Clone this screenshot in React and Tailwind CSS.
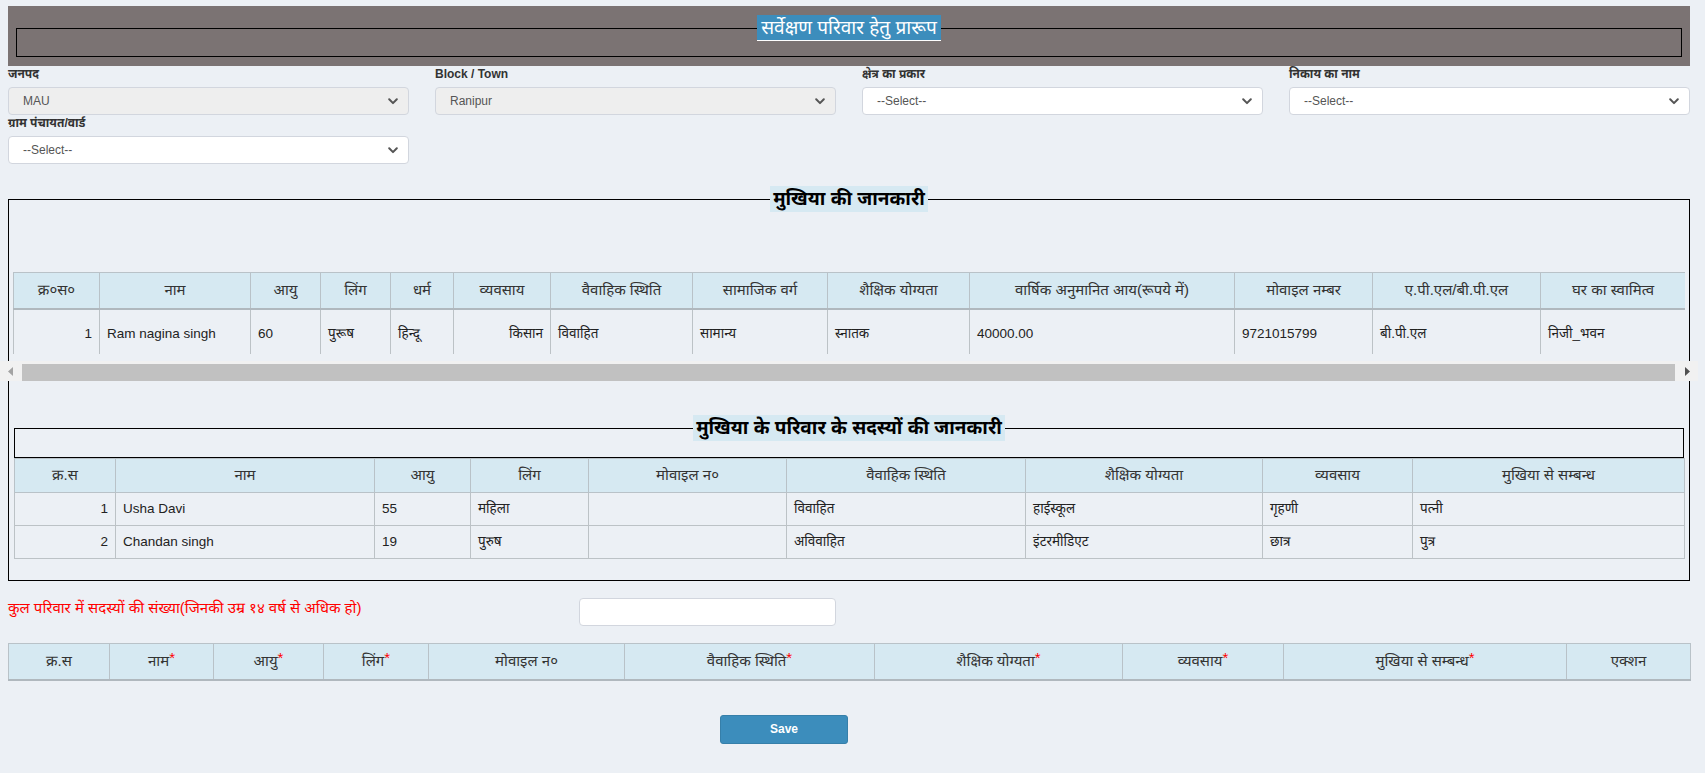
import React from 'react';

const FONT = { fontFamily: '"Liberation Sans", "Noto Sans Devanagari", "Lohit Devanagari", "Noto Sans", Arial, sans-serif' };

const Chevron = () => (
  <svg width="10" height="7" viewBox="0 0 10 7" fill="none">
    <path d="M1.2 1.3 L5 5.1 L8.8 1.3" stroke="#555" strokeWidth="2" strokeLinecap="round" strokeLinejoin="round" />
  </svg>
);

const SelectBox = ({ label, value, disabled }) => (
  <div>
    <div className="h-[21px] text-[12px] leading-[16px] font-bold text-[#333]">{label}</div>
    <div
      className={`h-[28px] flex items-center justify-between pl-[14px] pr-[10px] border border-[#d2d6de] rounded-[4px] text-[12px] text-[#555] ${
        disabled ? 'bg-[#eeeeee]' : 'bg-white'
      }`}
    >
      <span>{value}</span>
      <Chevron />
    </div>
  </div>
);

const Star = () => <span className="text-[#ff0000] align-top text-[15px] leading-[16px]">*</span>;

const headCell = 'border border-[#b9c2c8] bg-[#d6e9f2] text-center font-normal text-[#333] px-[6px] text-[15px]';
const bodyCell = 'border border-[#bcc2c6] text-[#222] px-[7px] whitespace-nowrap';

const mukhiyaCols = [86, 151, 70, 70, 63, 97, 142, 135, 142, 265, 138, 168, 145];
const mukhiyaHead = [
  'क्र०स०', 'नाम', 'आयु', 'लिंग', 'धर्म', 'व्यवसाय', 'वैवाहिक स्थिति', 'सामाजिक वर्ग',
  'शैक्षिक योग्यता', 'वार्षिक अनुमानित आय(रूपये में)', 'मोवाइल नम्बर', 'ए.पी.एल/बी.पी.एल', 'घर का स्वामित्व',
];
const mukhiyaRow = [
  '1', 'Ram nagina singh', '60', 'पुरूष', 'हिन्दू', 'किसान', 'विवाहित', 'सामान्य',
  'स्नातक', '40000.00', '9721015799', 'बी.पी.एल', 'निजी_भवन',
];

const memberCols = [101, 259, 96, 118, 198, 239, 237, 150, 272];
const memberHead = ['क्र.स', 'नाम', 'आयु', 'लिंग', 'मोवाइल न०', 'वैवाहिक स्थिति', 'शैक्षिक योग्यता', 'व्यवसाय', 'मुखिया से सम्बन्ध'];
const members = [
  ['1', 'Usha Davi', '55', 'महिला', '', 'विवाहित', 'हाईस्कूल', 'गृहणी', 'पत्नी'],
  ['2', 'Chandan singh', '19', 'पुरुष', '', 'अविवाहित', 'इंटरमीडिएट', 'छात्र', 'पुत्र'],
];

const entryCols = [101, 104, 110, 105, 196, 250, 248, 161, 283, 124];
const entryHead = [
  ['क्र.स', false], ['नाम', true], ['आयु', true], ['लिंग', true], ['मोवाइल न०', false],
  ['वैवाहिक स्थिति', true], ['शैक्षिक योग्यता', true], ['व्यवसाय', true], ['मुखिया से सम्बन्ध', true], ['एक्शन', false],
];

export default function App() {
  return (
    <div style={FONT} className="min-h-[773px] bg-[#ecf0f5] pl-2 pr-[15px] pt-[6px] text-[13.5px] text-[#333]">
      {/* page title band */}
      <div className="h-[60px] bg-[#7b7373] px-[8px] pt-[9px]">
        <fieldset className="h-[42px] border border-black min-w-0">
          <legend className="mx-auto bg-[#3c8dbc] text-white text-[19px] leading-[25px] px-[4px] border-b border-white">
            सर्वेक्षण परिवार हेतु प्रारूप
          </legend>
        </fieldset>
      </div>

      {/* filters */}
      <div className="grid grid-cols-4 gap-x-[26px]">
        <SelectBox label="जनपद" value="MAU" disabled />
        <SelectBox label="Block / Town" value="Ranipur" disabled />
        <SelectBox label="क्षेत्र का प्रकार" value="--Select--" />
        <SelectBox label="निकाय का नाम" value="--Select--" />
        <SelectBox label="ग्राम पंचायत/वार्ड" value="--Select--" />
      </div>

      {/* mukhiya info */}
      <fieldset className="mt-[22px] border border-black px-[4px] pb-[21px] min-w-0">
        <legend className="mx-auto bg-[#d6e9f2] text-black font-bold text-[19px] leading-[26px] px-[3px]">
          मुखिया की जानकारी
        </legend>

        <div className="mt-[60px] h-[82px] overflow-hidden">
          <table className="table-fixed border-collapse w-[1672px]">
            <colgroup>
              {mukhiyaCols.map((w, i) => (
                <col key={i} style={{ width: w }} />
              ))}
            </colgroup>
            <thead>
              <tr className="h-[36px]">
                {mukhiyaHead.map((h, i) => (
                  <th key={i} className={`${headCell} border-b-2 border-b-[#b0b8be]`}>
                    {h}
                  </th>
                ))}
              </tr>
            </thead>
            <tbody>
              <tr className="h-[50px]">
                {mukhiyaRow.map((c, i) => (
                  <td key={i} className={`${bodyCell} ${i === 0 || i === 5 ? 'text-right' : 'text-left'}`}>
                    {c}
                  </td>
                ))}
              </tr>
            </tbody>
          </table>
        </div>

        {/* horizontal scrollbar */}
        <div className="-mx-[13px] mt-[7px] h-[20px] bg-[#f1f1f1] flex items-center">
          <div className="w-[22px] h-full flex items-center justify-center">
            <svg width="6" height="9" viewBox="0 0 6 9">
              <path d="M5 0 L0 4.5 L5 9 Z" fill="#a3a3a3" />
            </svg>
          </div>
          <div className="flex-1 h-[17px] mt-[2px] bg-[#c1c1c1]"></div>
          <div className="w-[23px] h-full flex items-center justify-center">
            <svg width="6" height="9" viewBox="0 0 6 9">
              <path d="M1 0 L6 4.5 L1 9 Z" fill="#505050" />
            </svg>
          </div>
        </div>

        {/* family members */}
        <div className="mt-[34px] mx-[1px]">
          <fieldset className="h-[43px] border border-black min-w-0">
            <legend className="mx-auto bg-[#d6e9f2] text-black font-bold text-[19px] leading-[26px] px-[3px]">
              मुखिया के परिवार के सदस्यों की जानकारी
            </legend>
          </fieldset>
          <table className="table-fixed border-collapse w-[1670px]">
            <colgroup>
              {memberCols.map((w, i) => (
                <col key={i} style={{ width: w }} />
              ))}
            </colgroup>
            <thead>
              <tr className="h-[34px]">
                {memberHead.map((h, i) => (
                  <th key={i} className={headCell}>
                    {h}
                  </th>
                ))}
              </tr>
            </thead>
            <tbody>
              {members.map((row, r) => (
                <tr key={r} className="h-[33px]">
                  {row.map((c, i) => (
                    <td key={i} className={`${bodyCell} ${i === 0 ? 'text-right' : 'text-left'}`}>
                      {c}
                    </td>
                  ))}
                </tr>
              ))}
            </tbody>
          </table>
        </div>
      </fieldset>

      {/* member count */}
      <div className="flex items-start mt-[17px]">
        <div className="w-[571px] pt-[1px] text-[15px] leading-[18px] text-[#ff0000]">
          कुल परिवार में सदस्यों की संख्या(जिनकी उम्र १४ वर्ष से अधिक हो)
        </div>
        <div className="w-[257px] h-[28px] bg-white border border-[#d2d6de] rounded-[4px]"></div>
      </div>

      {/* new member entry header */}
      <table className="mt-[17px] table-fixed border-collapse w-[1682px]">
        <colgroup>
          {entryCols.map((w, i) => (
            <col key={i} style={{ width: w }} />
          ))}
        </colgroup>
        <thead>
          <tr className="h-[36px]">
            {entryHead.map(([h, req], i) => (
              <th key={i} className={`${headCell} border-b-2 border-b-[#b0b8be]`}>
                {h}
                {req && <Star />}
              </th>
            ))}
          </tr>
        </thead>
      </table>

      <div className="mt-[34px] pl-[712px]">
        <button className="w-[128px] h-[29px] bg-[#3c8dbc] border border-[#367fa9] rounded-[3px] text-white text-[12px] font-bold">
          Save
        </button>
      </div>
    </div>
  );
}
